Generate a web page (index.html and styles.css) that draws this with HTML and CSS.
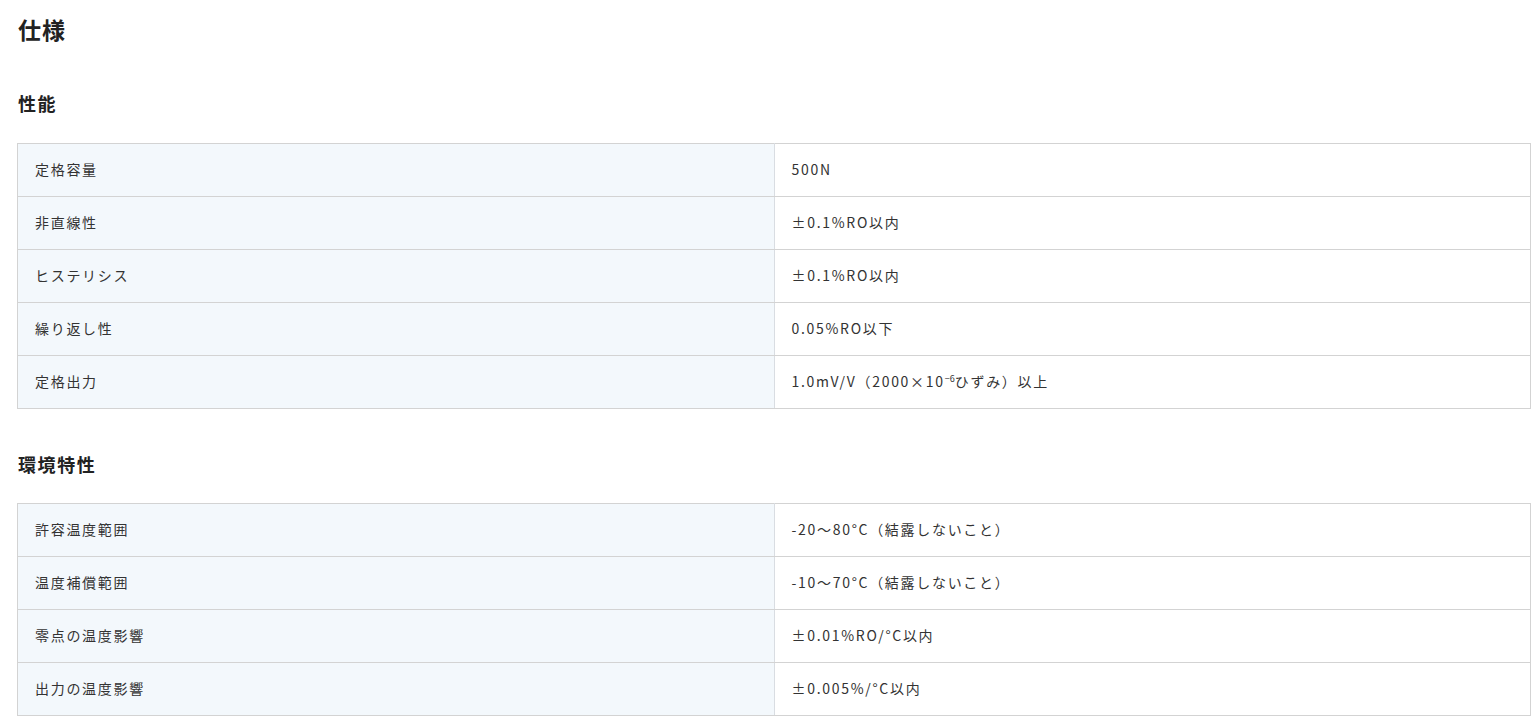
FILE: index.html
```html
<!DOCTYPE html>
<html lang="ja">
<head>
<meta charset="utf-8">
<title>仕様</title>
<link rel="stylesheet" href="styles.css">
</head>
<body>
<main class="page">
  <h2 class="title">仕様</h2>
  <section class="group">
    <h3 class="subtitle">性能</h3>
    <table class="spec">
      <tr><th>定格容量</th><td>500N</td></tr>
      <tr><th>非直線性</th><td>±0.1%RO以内</td></tr>
      <tr><th>ヒステリシス</th><td>±0.1%RO以内</td></tr>
      <tr><th>繰り返し性</th><td>0.05%RO以下</td></tr>
      <tr><th>定格出力</th><td>1.0mV/V（2000×10<sup>−6</sup>ひずみ）以上</td></tr>
    </table>
  </section>
  <section class="group group-2">
    <h3 class="subtitle">環境特性</h3>
    <table class="spec">
      <tr><th>許容温度範囲</th><td>-20～80°C（結露しないこと）</td></tr>
      <tr><th>温度補償範囲</th><td>-10～70°C（結露しないこと）</td></tr>
      <tr><th>零点の温度影響</th><td>±0.01%RO/°C以内</td></tr>
      <tr><th>出力の温度影響</th><td>±0.005%/°C以内</td></tr>
    </table>
  </section>
</main>
</body>
</html>
```
FILE: styles.css
```css
html, body {
  margin: 0;
  padding: 0;
  background: #fff;
}
body {
  font-family: "Noto Sans CJK JP", "Noto Sans", sans-serif;
  color: #333;
}
.page {
  padding: 0 9px 0 17px;
}
.title {
  margin: 13px 0 0 1px;
  font-size: 23px;
  line-height: 32px;
  letter-spacing: 1px;
  font-weight: 700;
  color: #222;
}
.subtitle {
  margin: 44px 0 26px 1px;
  font-size: 18px;
  line-height: 28px;
  letter-spacing: 1.6px;
  font-weight: 700;
  color: #222;
}
.group-2 .subtitle {
  margin-top: 41px;
  margin-bottom: 25px;
}
.spec {
  width: 100%;
  border-collapse: collapse;
  table-layout: fixed;
  border: 1px solid #d3d3d3;
}
.spec th,
.spec td {
  box-sizing: border-box;
  border-bottom: 1px solid #d3d3d3;
  padding: 14px 17px 16px;
  font-size: 14px;
  line-height: 22px;
  letter-spacing: 1.7px;
  text-align: left;
  vertical-align: middle;
  font-weight: 400;
  color: #333;
}
.spec th {
  width: 50%;
  background: #f3f8fc;
  border-right: 1px solid #d9dde2;
}
.spec td {
  background: #fff;
}
.spec sup {
  font-size: 9px;
  line-height: 0;
  letter-spacing: 0;
  vertical-align: 5px;
}
```
